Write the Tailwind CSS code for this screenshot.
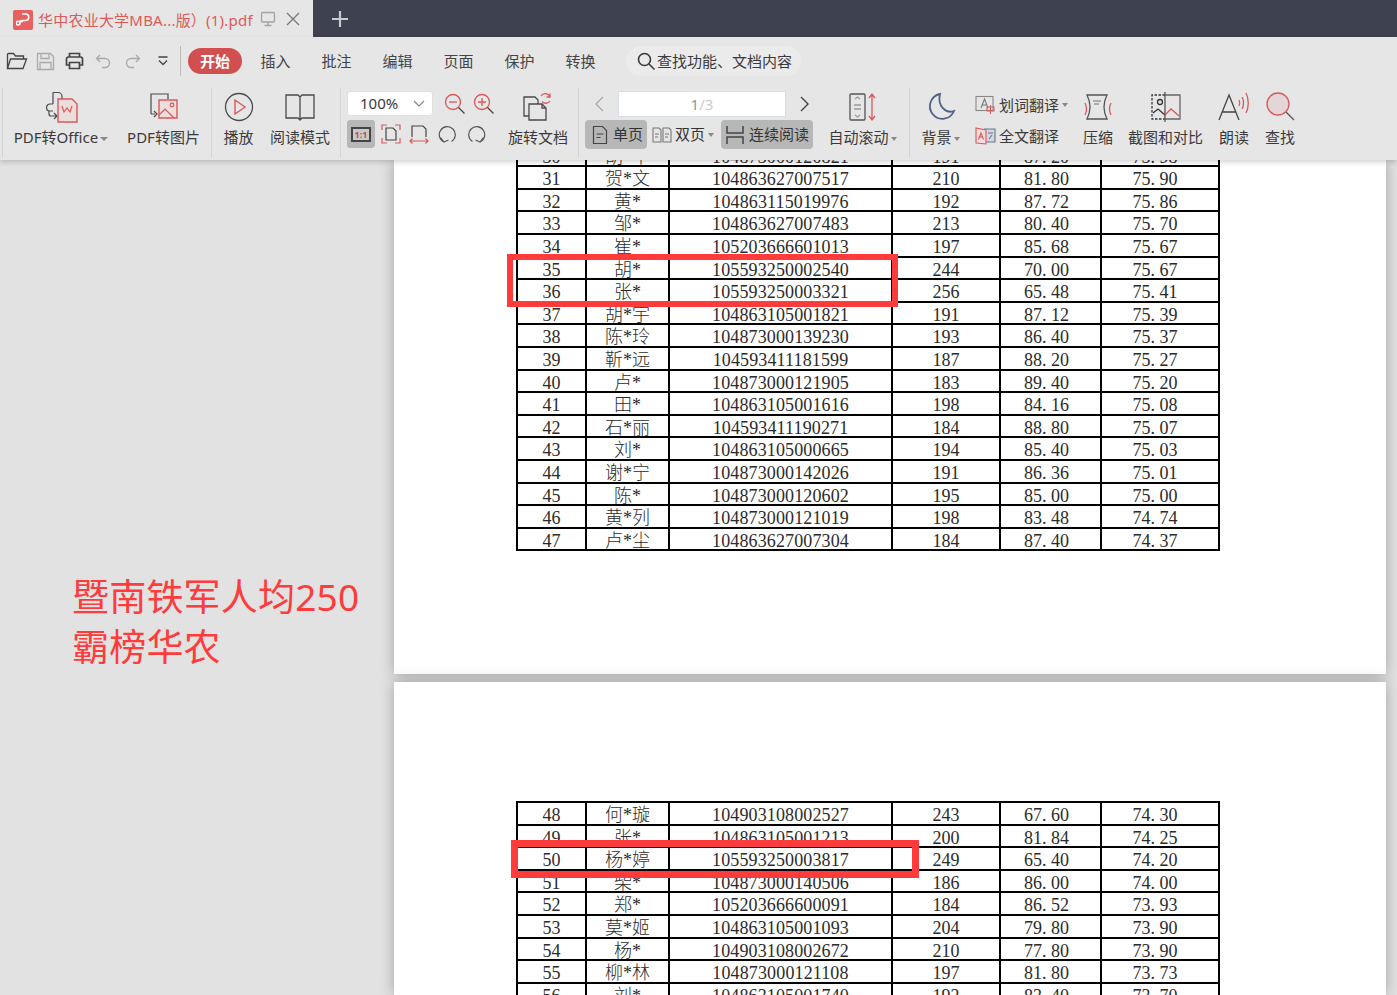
<!DOCTYPE html>
<html lang="zh">
<head>
<meta charset="utf-8">
<title>PDF</title>
<script src="https://cdn.jsdelivr.net/npm/@tailwindcss/browser@4"></script>
</head>
<body class="w-[1397px] h-[995px] overflow-hidden bg-[#e2e2e2] font-['Noto_Sans','Noto_Sans_CJK_SC',sans-serif] text-[15px] text-[#3a3a3a]">

  <!-- Tabs -->
  <div class="h-[37px] bg-[#3e414f] flex items-stretch">
    <div class="w-[313px] bg-[#e6e6e6] flex items-center pl-[13px] pt-[3px]">
      <span class="w-5 h-5 rounded-[2px] bg-[#e8605f] flex items-center justify-center">
        <svg width="14" height="16" viewBox="0 0 14 16" fill="none" stroke="#fff" stroke-width="1.6"><path d="M6 2h3.500a3 3 0 0 1 0 6.500H6.500a2.500 2.500 0 0 0-2.500 2.500 2 2 0 0 1-2 2 1.800 1.800 0 0 1 0-3.600h5"/></svg>
      </span>
      <span class="ml-[5px] text-[#dd5a58] whitespace-nowrap w-[221px] tracking-[0.22px]">华中农业大学MBA...版）(1).pdf</span>
      <svg width="16" height="16" viewBox="0 0 16 16" fill="none" stroke="#a3a3a3" stroke-width="1.300" class="ml-[1px] mt-[-2px]"><rect x="1.500" y="1.500" width="13" height="9.500" rx="1"/><path d="M8 11v3M4.500 14.500h7"/></svg>
      <svg width="14" height="14" viewBox="0 0 14 14" fill="none" stroke="#777" stroke-width="1.300" class="ml-[10px] mt-[-3px]"><path d="M1 1l12 12M13 1L1 13"/></svg>
    </div>
    <div class="flex items-center pl-[19px] pt-[1px]">
      <svg width="16" height="16" viewBox="0 0 16 16" stroke="#c9cad0" stroke-width="2.200"><path d="M8 0v16M0 8h16"/></svg>
    </div>
  </div>

  <!-- Toolbar -->
  <div class="relative z-10 h-[123px] bg-[#e6e6e6] shadow-[0_2px_5px_rgba(0,0,0,0.18)]">

    <!-- Menu row -->
    <div class="h-[48px] flex items-center pl-[6px]">
      <div class="flex items-center w-[174px]">
        <svg class="w-[22px]" width="22" height="20" viewBox="0 0 22 20" fill="none" stroke="#444" stroke-width="1.300"><path d="M1.500 17V3.500a1 1 0 0 1 1-1h5l2 2.500h8v3M1.500 17.500l3-9.500h16l-3.500 9.500z"/></svg>
        <svg class="ml-[8px]" width="19" height="19" viewBox="0 0 19 19" fill="none" stroke="#aaa" stroke-width="1.300"><path d="M1.500 1.500h13l3 3v13h-16zM5 1.500v5h8v-5M4 17.500v-7h11v7"/></svg>
        <svg class="ml-[10px]" width="19" height="18" viewBox="0 0 19 18" fill="none" stroke="#444" stroke-width="1.700"><path d="M4.500 5V1.500h10V5M4 13H1.500V7a2 2 0 0 1 2-2h12a2 2 0 0 1 2 2v6H15M4.500 10.500h10v6h-10z"/></svg>
        <svg class="ml-[11px]" width="16" height="16" viewBox="0 0 16 16" fill="none" stroke="#aaa" stroke-width="1.400"><path d="M5 2L1.500 5.500 5 9M1.500 5.500H10a4.500 4.500 0 0 1 0 9H7"/></svg>
        <svg class="ml-[14px]" width="16" height="16" viewBox="0 0 16 16" fill="none" stroke="#aaa" stroke-width="1.400"><path d="M11 2l3.500 3.500L11 9M14.500 5.500H6a4.500 4.500 0 0 0 0 9h3"/></svg>
        <svg class="ml-[17px]" width="10" height="10" viewBox="0 0 10 10" fill="none" stroke="#444" stroke-width="1.300"><path d="M0.500 1h9M1 4.500l4 4 4-4"/></svg>
      </div>
      <span class="w-px h-[30px] bg-[#bdbdbd]"></span>
      <span class="ml-[7px] w-[54px] h-[26px] rounded-full bg-[#d14f50] text-white font-bold flex items-center justify-center">开始</span>
      <div class="ml-[3px] flex text-[#444]">
        <span class="w-[61px] text-center">插入</span>
        <span class="w-[61px] text-center">批注</span>
        <span class="w-[61px] text-center">编辑</span>
        <span class="w-[61px] text-center">页面</span>
        <span class="w-[61px] text-center">保护</span>
        <span class="w-[61px] text-center">转换</span>
      </div>
      <div class="ml-[15px] w-[175px] h-[30px] rounded-full bg-[#ebebeb] flex items-center pl-[10px] whitespace-nowrap">
        <svg width="20" height="20" viewBox="0 0 20 20" fill="none" stroke="#3a3a3a" stroke-width="1.600"><circle cx="8.500" cy="8.500" r="6"/><path d="M13 13l5.500 5.500"/></svg>
        <span class="ml-[1px]">查找功能、文档内容</span>
      </div>
    </div>

    <!-- Ribbon -->
    <div class="h-[75px] flex items-stretch pl-[2px] whitespace-nowrap">
      <!-- PDF -->
      <div class="w-[209px] border-l border-[#d2d2d2] my-[3px] flex">
        <div class="w-[116px] flex flex-col items-center">
          <svg class="mt-[3px] ml-[3px]" width="34" height="32" viewBox="0 0 34 32" fill="none" stroke="#4a4a4a" stroke-width="1.200"><path d="M7 1.500h5a4 4 0 0 1 4 4V8M7 1.500V13M7 13H4a3.500 3.500 0 0 0 0 7h3M3 20v3a2 2 0 0 0 2 2h6M8 22l3 3-3 3"/><path d="M12 8h14l5 5v18H12z" stroke="#d9595a" stroke-width="1.400" fill="#eedddd"/><path d="M16 15l2 6 3-4 3 4 2-6" stroke="#d9595a"/></svg>
          <span class="mt-[3px]">PDF转Office<i class="inline-block ml-[2px] mb-[2px] border-x-[4px] border-x-transparent border-t-[4px] border-t-[#888]"></i></span>
        </div>
        <div class="w-[89px] flex flex-col items-center">
          <svg class="mt-[3px]" width="30" height="32" viewBox="0 0 30 32" fill="none" stroke="#4a4a4a" stroke-width="1.200"><path d="M2 23V3h17v5M2 23h4M5 20l3 3-3 3"/><path d="M10 9h18v18H10z" stroke="#d9595a" stroke-width="1.400" fill="#eedddd"/><path d="M10 24l6-6 9 9" stroke="#d9595a"/><circle cx="23" cy="14" r="1.800" stroke="#d9595a"/></svg>
          <span class="mt-[3px]">PDF转图片</span>
        </div>
      </div>
      <!-- Play -->
      <div class="w-[129px] border-l border-[#d2d2d2] my-[3px] flex">
        <div class="w-[53px] flex flex-col items-center">
          <svg class="mt-[3px]" width="32" height="32" viewBox="0 0 32 32" fill="none"><circle cx="16" cy="16" r="13.500" stroke="#4a4a4a" stroke-width="1.300"/><path d="M12 9l10 7-10 7z" stroke="#d9595a" stroke-width="1.400"/></svg>
          <span class="mt-[3px]">播放</span>
        </div>
        <div class="w-[70px] flex flex-col items-center">
          <svg class="mt-[3px]" width="32" height="32" viewBox="0 0 32 32" fill="none" stroke="#4a4a4a" stroke-width="1.300"><path d="M2 4h12l2 2 2-2h12v23H18l-2 2-2-2H2zM16 6v23"/></svg>
          <span class="mt-[3px]">阅读模式</span>
        </div>
      </div>
      <!-- Zoom -->
      <div class="w-[238px] border-l border-[#d2d2d2] my-[3px] flex">
        <div class="w-[157px] pl-[6px] pt-[3px]">
          <div class="flex items-center h-[25px]">
            <div class="w-[86px] h-[25px] bg-white rounded-[3px] border border-[#e0e0e0] flex items-center justify-between pl-[12px] pr-[7px]">
              <span class="text-[15px]">100%</span>
              <svg width="12" height="8" viewBox="0 0 12 8" fill="none" stroke="#888" stroke-width="1.200"><path d="M1 1l5 5 5-5"/></svg>
            </div>
            <svg class="ml-[11px]" width="22" height="22" viewBox="0 0 22 22" fill="none" stroke="#d9595a" stroke-width="1.300"><circle cx="9" cy="9" r="7.500"/><path d="M5 9h8"/><path d="M14.500 14.500l6 6" stroke="#444"/></svg>
            <svg class="ml-[7px]" width="22" height="22" viewBox="0 0 22 22" fill="none" stroke="#d9595a" stroke-width="1.300"><circle cx="9" cy="9" r="7.500"/><path d="M5 9h8M9 5v8"/><path d="M14.500 14.500l6 6" stroke="#444"/></svg>
          </div>
          <div class="flex items-center mt-[4px]">
            <span class="w-[28px] h-[28px] rounded-[3px] bg-[#b7b7b7] flex items-center justify-center">
              <span class="w-[20px] h-[15px] border-2 border-[#444] bg-[#c9c9c9] text-[#c14c4c] text-[9px] font-bold leading-[11px] text-center">1:1</span>
            </span>
            <svg class="ml-[6px]" width="20" height="20" viewBox="0 0 20 20" fill="none" stroke-width="1.200"><path d="M1 6V1h5M14 1h5v5M1 14v5h5M14 19h5v-5" stroke="#d9595a"/><path d="M5 4h7l3 3v9H5z" stroke="#444"/></svg>
            <svg class="ml-[8px]" width="20" height="20" viewBox="0 0 20 20" fill="none" stroke-width="1.200"><path d="M3 13V2h11l3 3v8" stroke="#444"/><path d="M1 17h18M3.500 14.500L1 17l2.500 2.500M16.500 14.500L19 17l-2.500 2.500" stroke="#d9595a"/></svg>
            <svg class="ml-[9px]" width="19" height="19" viewBox="0 0 19 19" fill="none" stroke="#555" stroke-width="1.200"><path d="M6 17a8 8 0 1 1 7.500-.5M2.500 12.500L6 17l4.500-2"/></svg>
            <svg class="ml-[10px]" width="19" height="19" viewBox="0 0 19 19" fill="none" stroke="#555" stroke-width="1.200"><path d="M13 17a8 8 0 1 0-7.500-.5M16.500 12.500L13 17l-4.500-2"/></svg>
          </div>
        </div>
        <div class="w-[80px] flex flex-col items-center">
          <svg class="mt-[3px]" width="32" height="32" viewBox="0 0 32 32" fill="none" stroke="#4a4a4a" stroke-width="1.300"><path d="M2 6h11l3 3v16H2z"/><path d="M7 13h13l4 4v12H7z" fill="#e6e6e6"/><path d="M20 13v4h4" /><path d="M19 5a5 5 0 0 1 9 1M28 2.500V6h-3.500M28 10a5 5 0 0 1-8 .5" stroke="#d9595a"/></svg>
          <span class="mt-[3px]">旋转文档</span>
        </div>
      </div>
      <!-- Pages -->
      <div class="w-[331px] border-l border-[#d2d2d2] my-[3px] flex">
        <div class="w-[240px] pl-[6px]">
          <div class="flex items-center h-[26px] mt-[3px]">
            <svg class="ml-[9px]" width="10" height="16" viewBox="0 0 10 16" fill="none" stroke="#aaa" stroke-width="1.400"><path d="M9 1L2 8l7 7"/></svg>
            <div class="ml-[14px] w-[168px] h-[26px] bg-white border border-[#d8dfea] flex items-center justify-center"><span class="text-[15px] text-[#8e949c]">1<span class="text-[#cccccc]">/3</span></span></div>
            <svg class="ml-[14px]" width="10" height="16" viewBox="0 0 10 16" fill="none" stroke="#444" stroke-width="1.400"><path d="M1 1l7 7-7 7"/></svg>
          </div>
          <div class="flex items-center h-[29px] mt-[3px] text-[#333]">
            <span class="w-[62px] h-[29px] rounded-[4px] bg-[#b7b7b7] flex items-center pl-[7px]">
              <svg width="16" height="20" viewBox="0 0 16 20" fill="none" stroke="#444" stroke-width="1.200"><path d="M1.500 1.500h9l4 4v13h-13zM4.500 9h7M4.500 12.500h4"/></svg>
              <span class="ml-[5px]">单页</span>
            </span>
            <span class="ml-[5px] w-[66px] flex items-center">
              <svg width="20" height="18" viewBox="0 0 20 18" fill="none" stroke="#777" stroke-width="1.100"><path d="M1 2h6l2 2v12H1zM11 2h6l2 2v12h-8zM3 8h4M3 11h3M13 8h4M13 11h3"/></svg>
              <span class="ml-[3px]">双页</span>
              <i class="ml-[3px] border-x-[3px] border-x-transparent border-t-[4px] border-t-[#888]"></i>
            </span>
            <span class="ml-[3px] w-[92px] h-[29px] rounded-[4px] bg-[#b7b7b7] flex items-center pl-[5px]">
              <svg width="18" height="20" viewBox="0 0 18 20" fill="none" stroke="#444" stroke-width="1.500"><path d="M1 1v7h16V1M1 19v-7h16v7" /></svg>
              <span class="ml-[5px]">连续阅读</span>
            </span>
          </div>
        </div>
        <div class="w-[87px] flex flex-col items-center">
          <svg class="mt-[3px]" width="28" height="32" viewBox="0 0 28 32" fill="none" stroke-width="1.300"><rect x="1" y="3" width="15" height="26" stroke="#555" rx="1"/><path d="M6 8l2.500-2 2.500 2M6 24l2.500 2 2.500-2M5 14h7M5 18h7" stroke="#999"/><path d="M23 3v26M20 7l3-4 3 4M20 25l3 4 3-4" stroke="#d9595a"/></svg>
          <span class="mt-[3px]">自动滚动<i class="inline-block ml-[2px] mb-[2px] border-x-[3px] border-x-transparent border-t-[4px] border-t-[#888]"></i></span>
        </div>
      </div>
      <!-- Tools -->
      <div class="flex-1 border-l border-[#d2d2d2] my-[3px] flex">
        <div class="w-[61px] flex flex-col items-center">
          <svg class="mt-[3px]" width="30" height="32" viewBox="0 0 30 32" fill="none" stroke="#4f6288" stroke-width="1.800"><path d="M14 3a12.500 12.500 0 1 0 14 17c-8 3-17-5-14-17z"/></svg>
          <span class="mt-[3px]">背景<i class="inline-block ml-[2px] mb-[2px] border-x-[3px] border-x-transparent border-t-[4px] border-t-[#888]"></i></span>
        </div>
        <div class="w-[99px] pl-[4px] pt-[4px]">
          <div class="flex items-center h-[26px]">
            <svg width="21" height="20" viewBox="0 0 21 20" fill="none" stroke-width="1.100"><rect x="1" y="1.500" width="17" height="14" stroke="#888"/><path d="M6 13l3.500-9 3.500 9M7.500 10h4" stroke="#777"/><path d="M12 12h7v4h-7zM15.500 10v9" stroke="#d9595a"/></svg>
            <span class="ml-[3px]">划词翻译</span>
            <i class="ml-[3px] border-x-[3px] border-x-transparent border-t-[4px] border-t-[#888]"></i>
          </div>
          <div class="flex items-center h-[26px] mt-[5px]">
            <svg width="21" height="20" viewBox="0 0 21 20" fill="none" stroke-width="1.100"><path d="M9 3h11v13H9" fill="#d4d8e2" stroke="#66758f"/><path d="M1 2l10 2v14L1 17z" fill="#f2dcdc" stroke="#d9595a"/><path d="M3.500 13.500L6 7l2.500 6.500M4.500 11h3" stroke="#d9595a"/><path d="M13 7h5M14 13l3-4" stroke="#66758f"/></svg>
            <span class="ml-[3px]">全文翻译</span>
          </div>
        </div>
        <div class="w-[48px] flex flex-col items-center ml-[4px]">
          <svg class="mt-[3px]" width="30" height="32" viewBox="0 0 30 32" fill="none" stroke-width="1.300"><path d="M4 4h20c-4 8-4 16 0 24H4c4-8 4-16 0-24z" stroke="#555"/><path d="M10 10h8M11 13h5" stroke="#999"/><path d="M2 12c2 4 2 8 0 12M28 12c-2 4-2 8 0 12" stroke="#d9595a"/></svg>
          <span class="mt-[3px]">压缩</span>
        </div>
        <div class="w-[85px] flex flex-col items-center ml-[1px]">
          <svg class="mt-[3px]" width="30" height="32" viewBox="0 0 30 32" fill="none" stroke-width="1.300"><path d="M14 4H1v24h13" stroke="#333" stroke-dasharray="2.500 1.500"/><path d="M14 1v30" stroke="#555"/><path d="M14 4h15v24H14" stroke="#666"/><circle cx="9" cy="11" r="2.500" stroke="#333"/><path d="M2 22l5-4 7 6" stroke="#333"/><path d="M14 24l6-6 8 7" stroke="#d9595a"/></svg>
          <span class="mt-[3px]">截图和对比</span>
        </div>
        <div class="w-[52px] flex flex-col items-center">
          <svg class="mt-[3px]" width="32" height="32" viewBox="0 0 32 32" fill="none" stroke-width="1.300"><path d="M1 29L11 4l10 25M4.500 21h13" stroke="#444"/><path d="M21 9c1 2 1 4 0 6M24 6c2 3 2 9 0 12M28 2c3 5 3 15 0 20" stroke="#d9595a"/></svg>
          <span class="mt-[3px]">朗读</span>
        </div>
        <div class="w-[40px] flex flex-col items-center">
          <svg class="mt-[3px]" width="30" height="32" viewBox="0 0 30 32" fill="none" stroke-width="1.300"><circle cx="13" cy="13" r="11" fill="#e4d6d6" stroke="#d9595a"/><path d="M21 21l8 8" stroke="#555"/></svg>
          <span class="mt-[3px]">查找</span>
        </div>
      </div>
    </div>
  </div>

  <!-- Document area -->
  <div class="flex h-[835px] overflow-hidden">
    <aside class="w-[394px] pl-[72px] pt-[412px] text-[37px] tracking-[0.2px] leading-[50px] text-[#ff3b3b]">暨南铁军人均250<br>霸榜华农</aside>

    <div class="w-[992px] flex flex-col gap-[8px]">
      <!-- Page 1 -->
      <section class="relative h-[514px] shrink-0 bg-white overflow-hidden shadow-[0_0_14px_rgba(0,0,0,0.28)]">
        <div id="page1" class="ml-[122px] mt-[-15.4px] w-[704px] border-l-2 border-black"></div>
        <div class="absolute left-[113px] top-[94px] w-[391px] h-[53px] border-[6px] border-[#ff3b3b]"></div>
      </section>
      <!-- Page 2 -->
      <section class="relative flex-1 bg-white overflow-hidden pt-[119px] shadow-[0_0_14px_rgba(0,0,0,0.28)]">
        <div id="page2" class="ml-[122px] w-[704px] border-l-2 border-t-2 border-black"></div>
        <div class="absolute left-[117px] top-[158px] w-[408px] h-[38px] border-[7px] border-[#ff3b3b]"></div>
      </section>
    </div>
  </div>

  <script>
    const page1 = [
      ['30', '胡*平', '104873000120821', '191', '87. 20', '75. 98'],
      ['31', '贺*文', '104863627007517', '210', '81. 80', '75. 90'],
      ['32', '黄*', '104863115019976', '192', '87. 72', '75. 86'],
      ['33', '邹*', '104863627007483', '213', '80. 40', '75. 70'],
      ['34', '崔*', '105203666601013', '197', '85. 68', '75. 67'],
      ['35', '胡*', '105593250002540', '244', '70. 00', '75. 67'],
      ['36', '张*', '105593250003321', '256', '65. 48', '75. 41'],
      ['37', '胡*宇', '104863105001821', '191', '87. 12', '75. 39'],
      ['38', '陈*玲', '104873000139230', '193', '86. 40', '75. 37'],
      ['39', '靳*远', '104593411181599', '187', '88. 20', '75. 27'],
      ['40', '卢*', '104873000121905', '183', '89. 40', '75. 20'],
      ['41', '田*', '104863105001616', '198', '84. 16', '75. 08'],
      ['42', '石*丽', '104593411190271', '184', '88. 80', '75. 07'],
      ['43', '刘*', '104863105000665', '194', '85. 40', '75. 03'],
      ['44', '谢*宁', '104873000142026', '191', '86. 36', '75. 01'],
      ['45', '陈*', '104873000120602', '195', '85. 00', '75. 00'],
      ['46', '黄*列', '104873000121019', '198', '83. 48', '74. 74'],
      ['47', '卢*尘', '104863627007304', '184', '87. 40', '74. 37'],
    ];
    const page2 = [
      ['48', '何*璇', '104903108002527', '243', '67. 60', '74. 30'],
      ['49', '张*', '104863105001213', '200', '81. 84', '74. 25'],
      ['50', '杨*婷', '105593250003817', '249', '65. 40', '74. 20'],
      ['51', '柴*', '104873000140506', '186', '86. 00', '74. 00'],
      ['52', '郑*', '105203666600091', '184', '86. 52', '73. 93'],
      ['53', '莫*姬', '104863105001093', '204', '79. 80', '73. 90'],
      ['54', '杨*', '104903108002672', '210', '77. 80', '73. 90'],
      ['55', '柳*林', '104873000121108', '197', '81. 80', '73. 73'],
      ['56', '刘*', '104863105001740', '192', '83. 40', '73. 70'],
    ];

    const cell = 'border-r-2 border-black text-center whitespace-pre';

    function renderRows(id, rows) {
      document.getElementById(id).innerHTML = rows.map(r => `
        <div class="grid grid-cols-[69px_83px_223px_108px_101px_118px] h-[22.6px] border-b-2 border-black font-['Liberation_Serif','Noto_Sans_CJK_SC',serif] text-[18px] leading-[25px] text-[#2b2b2b] overflow-hidden">
          <div class="${cell}">${r[0]}</div>
          <div class="${cell} font-light">${r[1]}</div>
          <div class="${cell} tracking-[0.13px]">${r[2]}</div>
          <div class="${cell}">${r[3]}</div>
          <div class="${cell} pr-[8px]">${r[4]}</div>
          <div class="${cell} pr-[10px]">${r[5]}</div>
        </div>`).join('');
    }

    renderRows('page1', page1);
    renderRows('page2', page2);
  </script>
</body>
</html>
